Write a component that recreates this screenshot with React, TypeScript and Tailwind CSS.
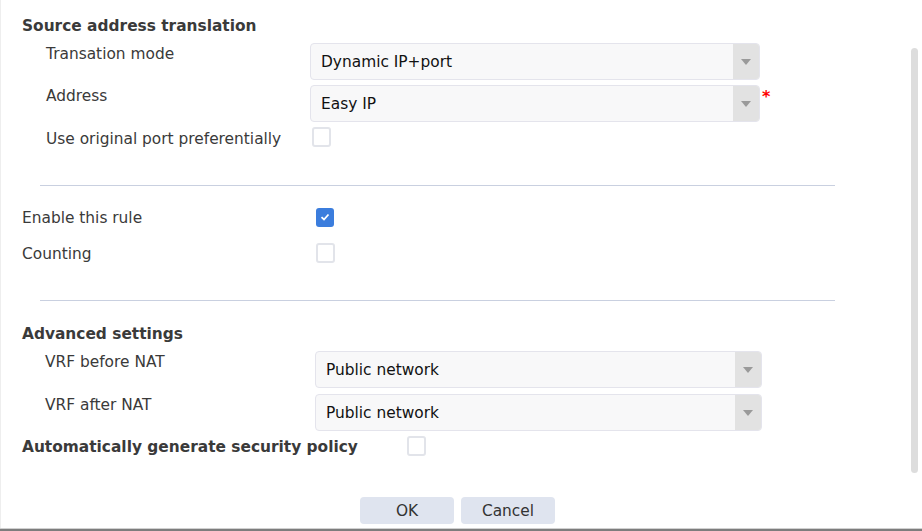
import React from 'react';

const font = { fontFamily: '"DejaVu Sans", Verdana, sans-serif' };

function Select({ value, width = 'w-[450px]' }: { value: string; width?: string }) {
  return (
    <div className={`flex h-[37px] ${width} overflow-hidden rounded-[4px] border border-[#e4e4ec] bg-[#f8f8f9]`}>
      <div className="flex flex-1 items-center pl-[10px] text-[15.4px] text-[#111]">{value}</div>
      <div className="flex w-[26px] items-center justify-center bg-[#e2e2e2]">
        <svg width="10" height="6" viewBox="0 0 10 6">
          <path d="M0 0 L10 0 L5 6 Z" fill="#9a9a9a" />
        </svg>
      </div>
    </div>
  );
}

function Checkbox({ checked = false }: { checked?: boolean }) {
  if (checked) {
    return (
      <div className="flex h-[19px] w-[18px] items-center justify-center rounded-[3px] bg-[#3b7ddd]">
        <svg width="10" height="8" viewBox="0 0 10 8">
          <path d="M1.5 4.2 L4 6.5 L8.5 1.5" stroke="#fff" strokeWidth="1.8" fill="none" />
        </svg>
      </div>
    );
  }
  return <div className="h-[20px] w-[19px] rounded-[3px] border-2 border-[#e2e4ea] bg-white" />;
}

export default function App() {
  return (
    <div className="relative h-[531px] w-[922px] overflow-hidden bg-white text-[15.4px] leading-[20px] text-[#3a3a3a]" style={font}>
      <div className="absolute left-0 top-0 h-[528px] w-px bg-[#eeeeee]" />
      <div className="absolute right-[4px] top-[48px] h-[425px] w-[7px] rounded-full bg-[#dddddd]" />

      <div className="flex flex-col">
        <div className="pl-[22px] pt-[16px] font-bold">Source address translation</div>

        <div className="mt-[7px] flex items-start">
          <div className="w-[310px] pl-[46px] pt-[1px]">Transation mode</div>
          <Select value="Dynamic IP+port" />
        </div>
        <div className="mt-[5px] flex items-start">
          <div className="w-[310px] pl-[46px] pt-[1px]">Address</div>
          <Select value="Easy IP" />
          <span className="ml-[2px] mt-[4px] text-[16px] font-bold leading-none text-[#ff0000]">*</span>
        </div>
        <div className="mt-[5px] flex items-start">
          <div className="w-[312px] pl-[46px] pt-[2px]">Use original port preferentially</div>
          <Checkbox />
        </div>

        <div className="ml-[40px] mt-[36px] h-px w-[795px] bg-[#c9d0e0]" />

        <div className="mt-[21px] flex h-[20px] items-center">
          <div className="w-[316px] pl-[22px] pt-[1px]">Enable this rule</div>
          <Checkbox checked />
        </div>
        <div className="mt-[16px] flex h-[20px] items-center">
          <div className="w-[316px] pl-[22px] pt-[1px]">Counting</div>
          <Checkbox />
        </div>

        <div className="ml-[40px] mt-[37px] h-px w-[795px] bg-[#c9d0e0]" />

        <div className="mt-[23px] pl-[22px] font-bold">Advanced settings</div>
        <div className="mt-[7px] flex items-start">
          <div className="w-[315px] pl-[45px] pt-[1px]">VRF before NAT</div>
          <Select value="Public network" width="w-[447px]" />
        </div>
        <div className="mt-[6px] flex items-start">
          <div className="w-[315px] pl-[45px] pt-[1px]">VRF after NAT</div>
          <Select value="Public network" width="w-[447px]" />
        </div>
        <div className="mt-[5px] flex items-start">
          <div className="w-[385px] pl-[22px] pt-[1px] font-bold">Automatically generate security policy</div>
          <div className="w-[22px]" />
          <Checkbox />
        </div>

        <div className="mt-[40px] flex gap-[7px] pl-[360px]">
          <button className="h-[27px] w-[94px] rounded-[4px] bg-[#dfe4ef] text-[15.4px] text-[#333]">OK</button>
          <button className="h-[27px] w-[94px] rounded-[4px] bg-[#dfe4ef] text-[15.4px] text-[#333]">Cancel</button>
        </div>
      </div>

      <div className="absolute bottom-0 left-0 h-[3px] w-full border-t border-[#d0d0d0] bg-[#7d7d7d]" />
    </div>
  );
}
